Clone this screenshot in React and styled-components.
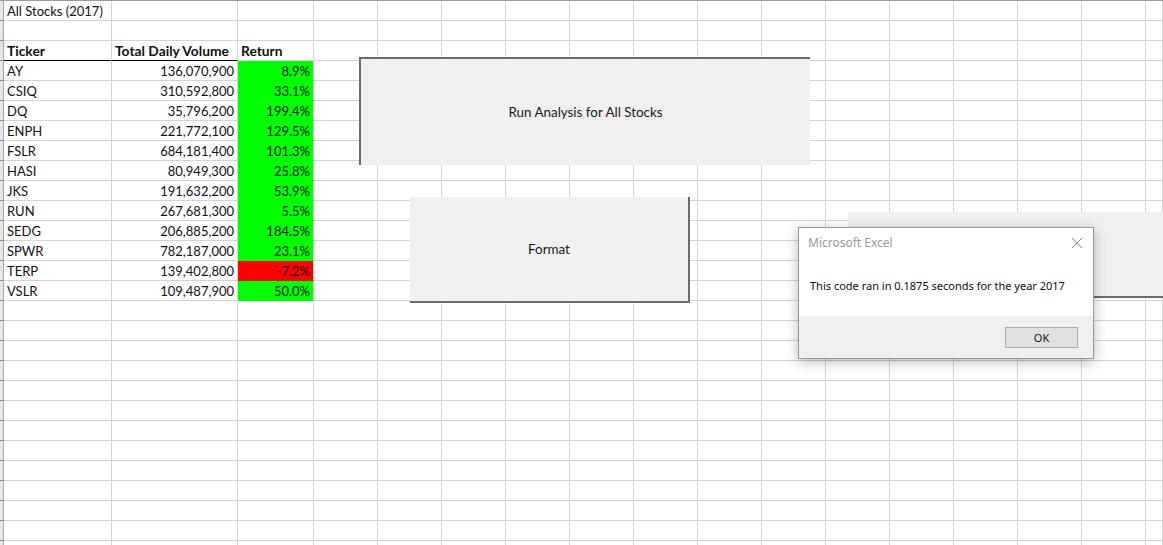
import React from 'react';
import styled, { createGlobalStyle } from 'styled-components';

const GlobalStyle = createGlobalStyle`
  html, body {
    margin: 0;
    padding: 0;
    background: #ffffff;
    overflow: hidden;
  }
  body {
    font-family: Lato, "Open Sans", sans-serif;
  }
`;

const COLS = '4px 108px 126px 76px repeat(13, 64px) 1fr';
const ROW_COUNT = 28;

const stocks = [
  ['AY', '136,070,900', '8.9%'],
  ['CSIQ', '310,592,800', '33.1%'],
  ['DQ', '35,796,200', '199.4%'],
  ['ENPH', '221,772,100', '129.5%'],
  ['FSLR', '684,181,400', '101.3%'],
  ['HASI', '80,949,300', '25.8%'],
  ['JKS', '191,632,200', '53.9%'],
  ['RUN', '267,681,300', '5.5%'],
  ['SEDG', '206,885,200', '184.5%'],
  ['SPWR', '782,187,000', '23.1%'],
  ['TERP', '139,402,800', '-7.2%'],
  ['VSLR', '109,487,900', '50.0%'],
];

const Page = styled.div`
  position: relative;
  width: 1163px;
  height: 545px;
  overflow: hidden;
`;

const Sheet = styled.div`
  display: flex;
  flex-direction: column;
  border-top: 1px solid #9b9b9b;
`;

const Row = styled.div`
  display: grid;
  grid-template-columns: ${COLS};
  height: 20px;
`;

const Gutter = styled.div`
  background: #e6e6e6;
  border-right: 1px solid #a6a6a6;
  border-bottom: 1px solid #8c8c8c;
`;

const Cell = styled.div`
  box-sizing: border-box;
  height: 20px;
  padding: 0 ${p => (p.$align === 'right' ? '3px' : '2px')} 0 3px;
  display: flex;
  align-items: center;
  justify-content: ${p => (p.$align === 'right' ? 'flex-end' : 'flex-start')};
  font-size: ${p => (p.$bold ? '13.8px' : '13px')};
  font-weight: ${p => (p.$bold ? 700 : 400)};
  color: #111;
  white-space: nowrap;
  overflow: visible;
  background: ${p => p.$fill || 'transparent'};
  border-right: 1px solid #d4d4d4;
  border-bottom: 1px solid ${p => (p.$underline ? '#000' : p.$fill || '#d4d4d4')};
`;

const SheetButton = styled.div`
  position: absolute;
  box-sizing: border-box;
  display: flex;
  align-items: center;
  justify-content: center;
  background: #f0f0f0;
  font-size: 13.4px;
  color: #1a1a1a;
  left: ${p => p.$x}px;
  top: ${p => p.$y}px;
  width: ${p => p.$w}px;
  height: ${p => p.$h}px;
  border-style: solid;
  border-color: #6b6b6b;
  border-width: ${p => (p.$sunken ? '2px 0 0 2px' : '0 2px 2px 0')};
`;

const Dialog = styled.div`
  position: absolute;
  left: 798px;
  top: 227px;
  width: 296px;
  height: 132px;
  box-sizing: border-box;
  border: 1px solid #9a9a9a;
  background: #ffffff;
  box-shadow: 0 3px 12px rgba(0, 0, 0, 0.28);
  display: flex;
  flex-direction: column;
  font-family: "Noto Sans", "Open Sans", sans-serif;
`;

const TitleBar = styled.div`
  height: 29px;
  display: flex;
  align-items: center;
  justify-content: space-between;
  padding: 0 10px 0 9px;
  font-size: 12px;
  color: #9a9a9a;
`;

const Message = styled.div`
  flex: 1;
  display: flex;
  align-items: center;
  padding: 0 0 2px 11px;
  font-size: 11px;
  color: #0c0c0c;
`;

const Footer = styled.div`
  height: 42px;
  background: #f0f0f0;
  display: flex;
  align-items: center;
  justify-content: flex-end;
  padding: 0 15px 0 0;
`;

const OkButton = styled.div`
  box-sizing: border-box;
  width: 73px;
  height: 21px;
  border: 1px solid #adadad;
  background: #e1e1e1;
  display: flex;
  align-items: center;
  justify-content: center;
  font-size: 11px;
  color: #111;
`;

function CloseIcon() {
  return (
    <svg width="12" height="12" viewBox="0 0 12 12">
      <path d="M1 1 L11 11 M11 1 L1 11" stroke="#8a8a8a" strokeWidth="1" fill="none" />
    </svg>
  );
}

function buildRows() {
  const rows = [];
  for (let r = 0; r < ROW_COUNT; r++) {
    const cells = [];
    let a = '', b = '', c = '';
    let bold = false, fill = null, underline = false;
    if (r === 0) a = 'All Stocks (2017)';
    if (r === 2) {
      a = 'Ticker'; b = 'Total Daily Volume'; c = 'Return';
      bold = true; underline = true;
    }
    const stock = stocks[r - 3];
    if (stock) {
      [a, b, c] = stock;
      fill = c.startsWith('-') ? '#ff0000' : '#00ff00';
    }
    cells.push(<Cell key="a" $bold={bold} $underline={underline}>{a}</Cell>);
    cells.push(<Cell key="b" $bold={bold} $underline={underline} $align={stock ? 'right' : 'left'}>{b}</Cell>);
    cells.push(<Cell key="c" $bold={bold} $fill={fill} $align={stock ? 'right' : 'left'}>{c}</Cell>);
    for (let k = 0; k < 14; k++) cells.push(<Cell key={'e' + k} />);
    rows.push(
      <Row key={r}>
        <Gutter />
        {cells}
      </Row>
    );
  }
  return rows;
}

export default function App() {
  return (
    <Page>
      <GlobalStyle />
      <Sheet>{buildRows()}</Sheet>

      <SheetButton $x={359} $y={57} $w={451} $h={108} $sunken>
        Run Analysis for All Stocks
      </SheetButton>
      <SheetButton $x={410} $y={197} $w={280} $h={106}>
        Format
      </SheetButton>
      <SheetButton $x={848} $y={212} $w={330} $h={86} />

      <Dialog>
        <TitleBar>
          <span>Microsoft Excel</span>
          <CloseIcon />
        </TitleBar>
        <Message>This code ran in 0.1875 seconds for the year 2017</Message>
        <Footer>
          <OkButton>OK</OkButton>
        </Footer>
      </Dialog>
    </Page>
  );
}
